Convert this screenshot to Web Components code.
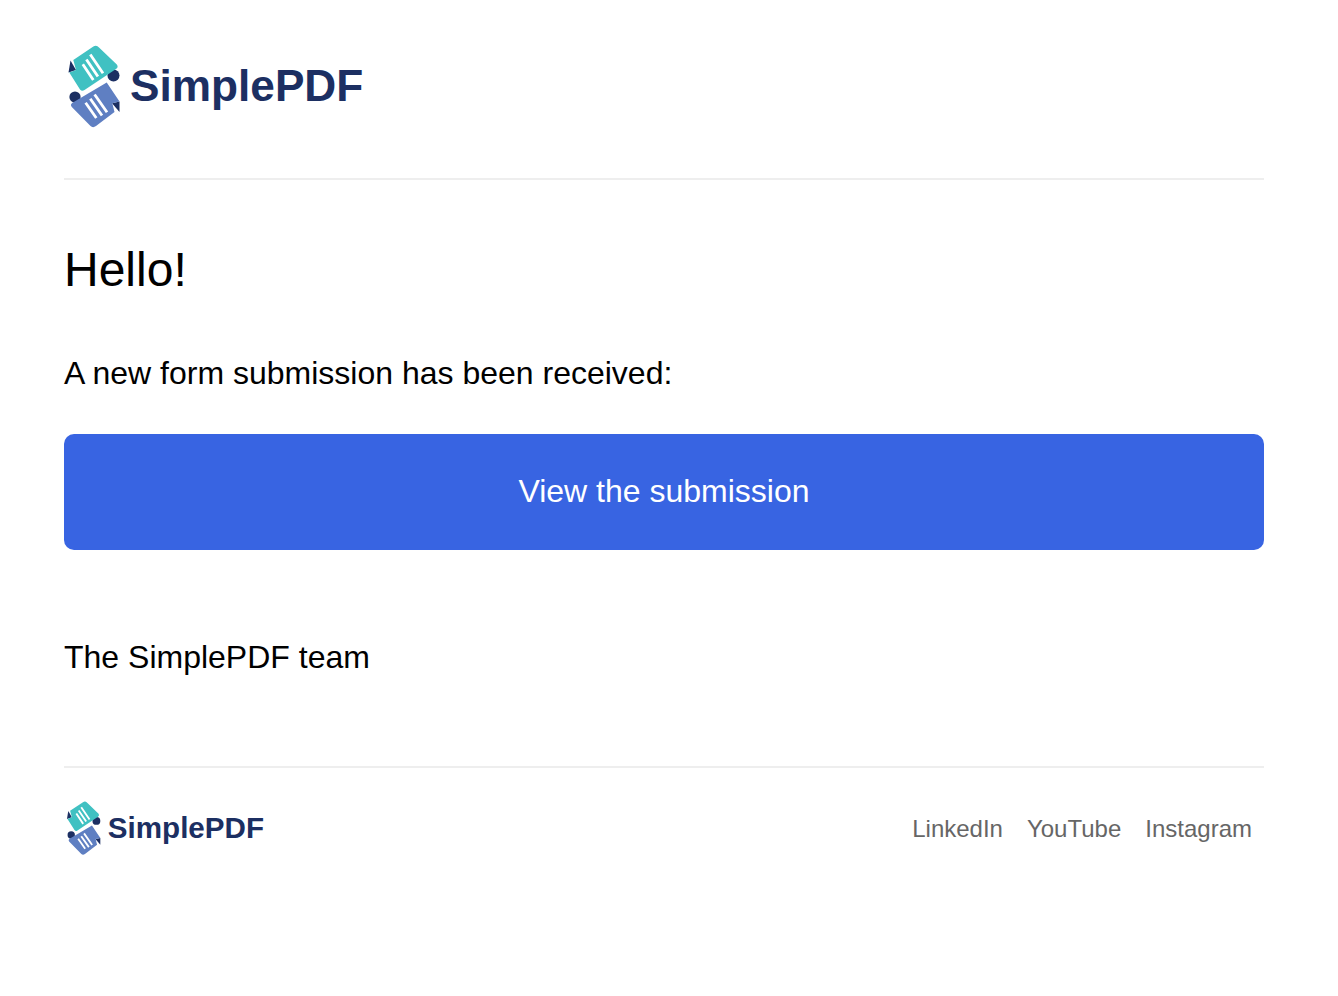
<!doctype html>
<html><head><meta charset="utf-8"><style>html,body{margin:0;background:#fff}</style></head><body>
<template id="logo-t"><style>
:host{display:flex;align-items:center;font-family:"Liberation Sans",Arial,sans-serif;font-weight:700;color:#1c2f62;font-size:var(--fs,44.2px);gap:var(--gap,6px);line-height:1}
svg{width:var(--w,60px);height:var(--h,88px);display:block;flex:none}
</style>
<svg viewBox="64 42 60 88" aria-hidden="true">
<path d="M70.500 60.500 L76 70 L68.500 72.500 Z" fill="#1c2f62"/>
<circle cx="113.500" cy="75.500" r="6" fill="#1c2f62"/>
<path d="M69.300 72.500 L76 70 L73.300 60 L93 46.800 Q96.500 44.500 99 47.500 L116.800 64.500 Q118.800 67 116 69 L84.500 90 Q82 91.800 80 89.500 Z" fill="#40c1c2"/>
<circle cx="75" cy="97" r="5.600" fill="#1c2f62"/>
<path d="M112 103.300 L119.500 101.500 L119.500 112 Z" fill="#1c2f62"/>
<path d="M106.700 82.500 L119.500 101.500 L112.300 103.300 L114.500 112 L96 126 Q93 128.300 90.500 126 L71.800 107 Q69.800 104.500 72.500 102.700 Z" fill="#5f7fc2"/>
<g stroke="#fff" stroke-width="2.800">
<path d="M82.800 64.300 L93.300 80M86.400 59.500 L97.900 76.500M90.300 54.500 L103 73.200"/>
<path d="M85.600 102.800 L96.300 118M90.300 98.800 L102 115.500M94.600 94.500 L107 112.200"/>
</g></svg><slot></slot></template>
<template id="page-t"><style>
:host{display:block;width:1200px;margin:0 64px;font-family:"Liberation Sans",Arial,sans-serif;color:#000}
header{padding:42px 0 48px;border-bottom:2px solid #eee}
h1{font-weight:400;font-size:48px;line-height:56px;margin:62px 0 0}
p{font-size:32px;line-height:40px;margin:0}
.intro{margin-top:55px}
a.btn{display:flex;align-items:center;justify-content:center;height:114px;padding-bottom:2px;margin-top:41px;background:#3864e2;border-radius:10px;color:#fff;font-size:32px;text-decoration:none}
.sign{margin-top:87px}
footer{margin-top:89px;border-top:2px solid #eee;padding-top:31px;display:flex;justify-content:space-between;align-items:center}
nav{display:flex;gap:24px;padding:2px 12px 0 0;font-size:24px;color:#666}
site-logo.small{--fs:29.600px;--w:39.300px;--h:57.600px;--gap:4.500px}
</style>
<header><site-logo>SimplePDF</site-logo></header>
<h1>Hello!</h1>
<p class="intro">A new form submission has been received:</p>
<a class="btn" href="#">View the submission</a>
<p class="sign">The SimplePDF team</p>
<footer><site-logo class="small">SimplePDF</site-logo><nav><span>LinkedIn</span><span>YouTube</span><span>Instagram</span></nav></footer>
</template>
<simple-page></simple-page>
<script>
class SiteLogo extends HTMLElement{constructor(){super();this.attachShadow({mode:'open'}).append(document.getElementById('logo-t').content.cloneNode(true))}}
class SimplePage extends HTMLElement{constructor(){super();this.attachShadow({mode:'open'}).append(document.getElementById('page-t').content.cloneNode(true))}}
customElements.define('site-logo',SiteLogo);customElements.define('simple-page',SimplePage);
</script></body></html>
